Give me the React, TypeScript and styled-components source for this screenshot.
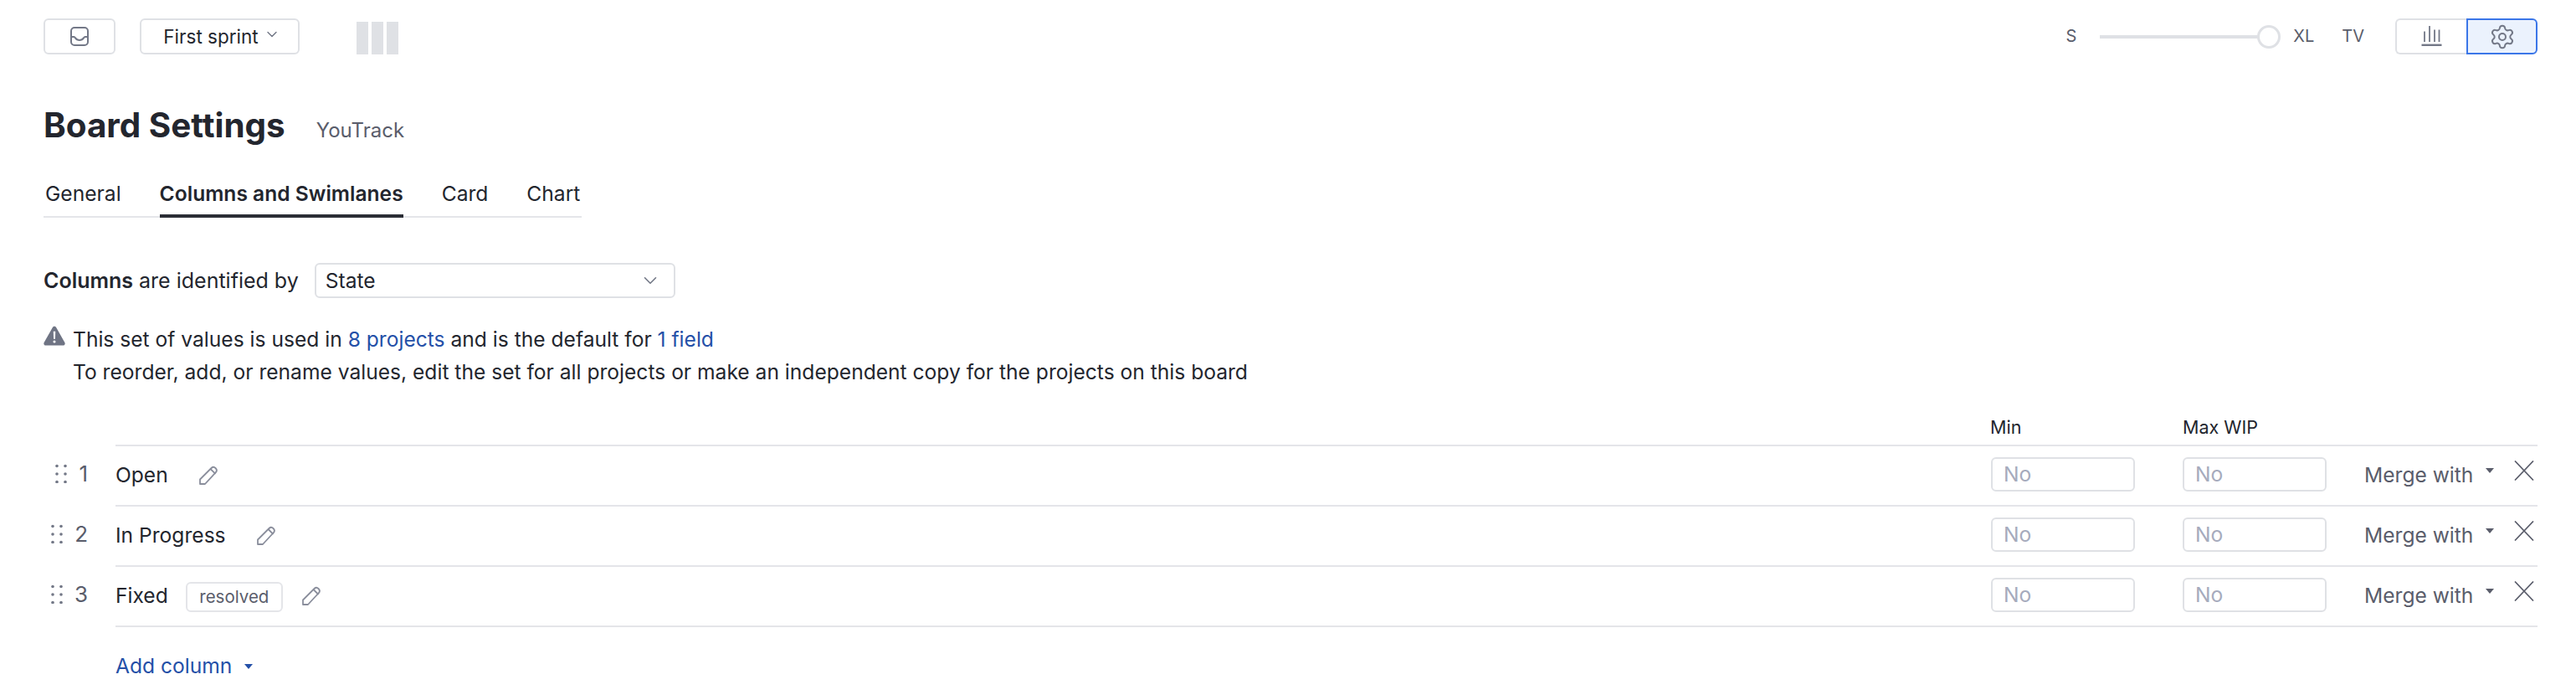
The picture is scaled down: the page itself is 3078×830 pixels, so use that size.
import React from "react";
import styled, { createGlobalStyle } from "styled-components";
import { ChevronDown, Settings } from "lucide-react";

const GlobalStyle = createGlobalStyle`
  html, body {
    margin: 0;
    padding: 0;
    background: #fff;
  }
  body {
    font-family: Inter, "Noto Sans", sans-serif;
    font-size: 24.6px;
    color: #23262e;
  }
`;

const Page = styled.div`
  width: 3078px;
  height: 830px;
  box-sizing: border-box;
  padding: 22px 46px 0 52px;
  overflow: hidden;
`;

const Toolbar = styled.div`
  display: flex;
  align-items: flex-start;
  height: 43px;
`;

const OutlineButton = styled.button<{ $width: number }>`
  display: flex;
  align-items: center;
  justify-content: center;
  gap: 11px;
  width: ${(props) => props.$width}px;
  height: 43px;
  margin-right: 29px;
  padding: 0;
  box-sizing: border-box;
  border: 2px solid #dfe1e5;
  border-radius: 6px;
  background: #fff;
  color: #23262e;
  font: inherit;
  font-size: 22.5px;
`;

const ButtonChevron = styled.span`
  display: flex;
  margin: -6px -5px 0 -5px;
  color: #737887;
`;

const BoardBars = styled.div`
  display: flex;
  gap: 4px;
  margin: 4px 0 0 39px;
`;

const BoardBar = styled.div`
  width: 14px;
  height: 39px;
  background: #dfe1e5;
`;

const Spacer = styled.div`
  flex: 1;
`;

const SizeLabel = styled.span<{ $gap?: number }>`
  font-size: 20px;
  line-height: 43px;
  color: #5a5d6b;
  margin-left: ${(props) => props.$gap || 0}px;
`;

const SliderTrack = styled.div`
  position: relative;
  width: 202px;
  height: 4px;
  margin: 20px 0 0 28px;
  background: #dfe1e5;
`;

const SliderKnob = styled.div`
  position: absolute;
  top: -12px;
  right: -14px;
  width: 28px;
  height: 28px;
  box-sizing: border-box;
  border: 3px solid #dfe1e5;
  border-radius: 50%;
  background: #fff;
`;

const ViewGroup = styled.div`
  display: flex;
  margin-left: 37px;
`;

const ViewButton = styled.div<{ $active?: boolean }>`
  display: flex;
  align-items: center;
  justify-content: center;
  width: 85px;
  height: 43px;
  box-sizing: border-box;
  border: 2px solid ${(props) => (props.$active ? "#3b76e8" : "#dfe1e5")};
  border-right-width: ${(props) => (props.$active ? 2 : 0)}px;
  border-radius: ${(props) => (props.$active ? "0 6px 6px 0" : "6px 0 0 6px")};
  background: ${(props) => (props.$active ? "#ebf2fd" : "#fff")};
  color: #737887;
`;

const TitleRow = styled.div`
  display: flex;
  align-items: baseline;
  margin-top: 61px;
  height: 48px;
`;

const Title = styled.h1`
  margin: 0;
  font-size: 40.4px;
  line-height: 48px;
  font-weight: 700;
  color: #23262e;
`;

const Subtitle = styled.span`
  margin-left: 37px;
  font-size: 24px;
  color: #5a5d6b;
`;

const TabsWrap = styled.div`
  display: flex;
`;

const Tabs = styled.div`
  display: inline-flex;
  gap: 46px;
  margin-top: 41px;
  padding: 0 2px;
  height: 43px;
  border-bottom: 2px solid #e4e5e9;
`;

const Tab = styled.div<{ $active?: boolean }>`
  box-sizing: border-box;
  height: 45px;
  line-height: 32px;
  font-weight: ${(props) => (props.$active ? 600 : 400)};
  border-bottom: ${(props) => (props.$active ? "4px solid #2a2d35" : "none")};
`;

const FieldRow = styled.div`
  display: flex;
  align-items: center;
  gap: 19px;
  margin-top: 54px;
  height: 42px;
`;

const FieldLabel = styled.span`
  font-size: 25px;
`;

const Strong = styled.b`
  font-weight: 600;
`;

const Select = styled.div`
  display: flex;
  align-items: center;
  justify-content: space-between;
  width: 431px;
  height: 42px;
  box-sizing: border-box;
  padding: 0 15px 0 11px;
  border: 2px solid #dfe1e5;
  border-radius: 6px;
  color: #737887;
`;

const SelectValue = styled.span`
  color: #23262e;
`;

const Notice = styled.div`
  display: flex;
  gap: 9px;
  margin-top: 30px;
`;

const NoticeIcon = styled.div`
  width: 26px;
  padding-top: 3px;
`;

const NoticeText = styled.div`
  line-height: 39px;
`;

const Link = styled.a`
  color: #2450a8;
`;

const HeaderRow = styled.div`
  display: flex;
  height: 37px;
  margin-top: 30px;
  padding-left: 2326px;
  font-size: 21.5px;
  line-height: 32px;
`;

const HeaderCell = styled.div`
  width: 230px;
`;

const Row = styled.div`
  display: flex;
`;

const Gutter = styled.div`
  display: flex;
  align-items: center;
  justify-content: flex-end;
  gap: 14px;
  width: 86px;
  padding: 0 33px 3px 0;
  box-sizing: border-box;
  font-size: 26px;
  color: #5a5d6b;
`;

const RowBody = styled.div`
  flex: 1;
  display: flex;
  align-items: center;
  height: 72px;
  box-sizing: border-box;
  padding-bottom: 3px;
  border-top: 2px solid #e4e5e9;
`;

const ColumnName = styled.span`
  white-space: nowrap;
`;

const Tag = styled.span`
  margin: 4px 0 0 21px;
  padding: 0 14.5px;
  height: 36px;
  line-height: 32px;
  box-sizing: border-box;
  border: 2px solid #e4e5e9;
  border-radius: 6px;
  font-size: 20.5px;
  color: #5a5d6b;
`;

const EditIcon = styled.svg<{ $gap: number }>`
  margin: 3px 0 0 ${(props) => props.$gap}px;
  flex: none;
  color: #8a8e9c;
`;

const LimitInput = styled.div`
  width: 172px;
  height: 41px;
  margin-right: 57px;
  box-sizing: border-box;
  padding-left: 13px;
  border: 2px solid #dfe1e5;
  border-radius: 6px;
  color: #a6abbd;
  line-height: 37px;
`;

const Merge = styled.div`
  display: flex;
  align-items: flex-start;
  gap: 15px;
  width: 179px;
  margin-left: -12px;
  line-height: 30px;
  color: #5a5d6b;
  white-space: nowrap;
`;

const Caret = styled.i<{ $color: string }>`
  display: block;
  width: 0;
  height: 0;
  margin-top: 7px;
  border-left: 5px solid transparent;
  border-right: 5px solid transparent;
  border-top: 6px solid ${(props) => props.$color};
`;

const RemoveIcon = styled.svg`
  flex: none;
  margin: -10px 4px 0 0;
  color: #5a5d6b;
`;

const Footer = styled.div`
  border-top: 2px solid #e4e5e9;
  margin-left: 86px;
  padding-top: 30px;
  display: flex;
  align-items: center;
  gap: 15px;
  line-height: 32px;
`;

const AddCaret = styled(Caret)`
  margin-top: 2px;
`;

const InboxIcon = () => (
  <svg width="22" height="23" viewBox="0 0 22 23" fill="none" stroke="#737887" strokeWidth="2">
    <rect x="1" y="1" width="20" height="21" rx="4" />
    <path d="M1 12h3.5c1.5 0 1.5 4 6.5 4s5-4 6.5-4H21" />
  </svg>
);

const ChartIcon = () => (
  <svg width="26" height="26" viewBox="0 0 26 26" fill="none" stroke="#737887" strokeWidth="1.8">
    <path d="M.5 22.8h24" strokeWidth="2.4" />
    <path d="M4 6.5V19M10 0v19M16 4.5V19M21.5 4.5V19" />
  </svg>
);

const WarningIcon = () => (
  <svg width="26" height="24" viewBox="0 0 27 24">
    <path
      d="M11.3 1.6c1-1.8 3.4-1.8 4.4 0l10.6 18.6c1 1.7-.2 3.8-2.2 3.8H2.9C.9 24-.3 21.9.7 20.2z"
      fill="#6f7484"
    />
    <path d="M12.2 6.5h2.6l-.3 9.5h-2z" fill="#fff" />
    <circle cx="13.5" cy="19.2" r="1.6" fill="#fff" />
  </svg>
);

const DragIcon = () => (
  <svg width="14" height="23" viewBox="0 0 14 23" fill="#737887">
    {[2.5, 12, 21.5].map((y) => (
      <React.Fragment key={y}>
        <circle cx="2" cy={y} r="1.8" />
        <circle cx="12" cy={y} r="1.8" />
      </React.Fragment>
    ))}
  </svg>
);

const PencilIcon = ({ gap }: { gap: number }) => (
  <EditIcon $gap={gap} width="24" height="24" viewBox="0 0 24 24" fill="none" stroke="currentColor" strokeWidth="1.8">
    <path d="M1 16.5 14 3.5c2-2 3.5-2.5 5.5-.5s2 3.5 0 5.5L7 22H1z" strokeLinejoin="round" />
    <path d="m13.5 4 6 6" />
  </EditIcon>
);

const CloseIcon = () => (
  <RemoveIcon width="24" height="24" viewBox="0 0 24 24" fill="none" stroke="currentColor" strokeWidth="1.7">
    <path d="M1 .5 23 23.5M23 .5 1 23.5" />
  </RemoveIcon>
);

const columns = [
  { name: "Open" },
  { name: "In Progress" },
  { name: "Fixed", tag: "resolved" },
];

export default function App() {
  return (
    <Page>
      <GlobalStyle />
      <Toolbar>
        <OutlineButton $width={86}>
          <InboxIcon />
        </OutlineButton>
        <OutlineButton $width={191}>
          First sprint
          <ButtonChevron>
            <ChevronDown size={20} strokeWidth={1.7} />
          </ButtonChevron>
        </OutlineButton>
        <BoardBars>
          <BoardBar />
          <BoardBar />
          <BoardBar />
        </BoardBars>
        <Spacer />
        <SizeLabel>S</SizeLabel>
        <SliderTrack>
          <SliderKnob />
        </SliderTrack>
        <SizeLabel $gap={29}>XL</SizeLabel>
        <SizeLabel $gap={33}>TV</SizeLabel>
        <ViewGroup>
          <ViewButton>
            <ChartIcon />
          </ViewButton>
          <ViewButton $active>
            <Settings size={32} strokeWidth={1.5} />
          </ViewButton>
        </ViewGroup>
      </Toolbar>

      <TitleRow>
        <Title>Board Settings</Title>
        <Subtitle>YouTrack</Subtitle>
      </TitleRow>

      <TabsWrap>
        <Tabs>
          <Tab>General</Tab>
          <Tab $active>Columns and Swimlanes</Tab>
          <Tab>Card</Tab>
          <Tab>Chart</Tab>
        </Tabs>
      </TabsWrap>

      <FieldRow>
        <FieldLabel>
          <Strong>Columns</Strong> are identified by
        </FieldLabel>
        <Select>
          <SelectValue>State</SelectValue>
          <ChevronDown size={26} strokeWidth={1.5} />
        </Select>
      </FieldRow>

      <Notice>
        <NoticeIcon>
          <WarningIcon />
        </NoticeIcon>
        <NoticeText>
          This set of values is used in <Link>8 projects</Link> and is the default for <Link>1 field</Link>
          <br />
          To reorder, add, or rename values, edit the set for all projects or make an independent copy for the projects on this board
        </NoticeText>
      </Notice>

      <HeaderRow>
        <HeaderCell>Min</HeaderCell>
        <HeaderCell>Max WIP</HeaderCell>
      </HeaderRow>

      {columns.map((column, index) => (
        <Row key={column.name}>
          <Gutter>
            <DragIcon />
            {index + 1}
          </Gutter>
          <RowBody>
            <ColumnName>{column.name}</ColumnName>
            {column.tag && <Tag>{column.tag}</Tag>}
            <PencilIcon gap={column.tag ? 23 : 37} />
            <Spacer />
            <LimitInput>No</LimitInput>
            <LimitInput>No</LimitInput>
            <Merge>
              Merge with
              <Caret $color="#5a5d6b" />
            </Merge>
            <CloseIcon />
          </RowBody>
        </Row>
      ))}

      <Footer>
        <Link>Add column</Link>
        <AddCaret $color="#2450a8" />
      </Footer>
    </Page>
  );
}
